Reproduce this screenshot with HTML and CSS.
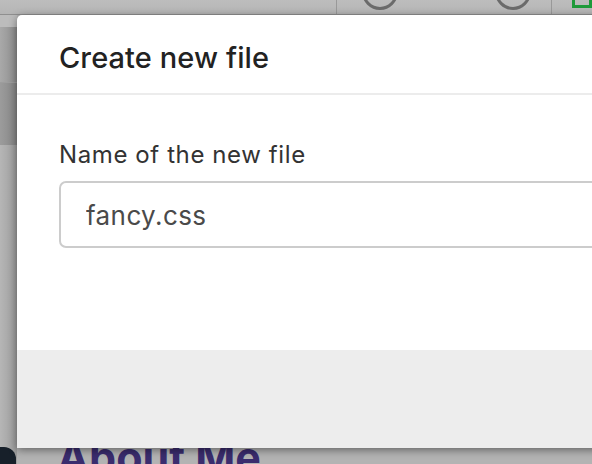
FILE: index.html
```html
<!DOCTYPE html>
<html lang="en">
<head>
    <meta charset="UTF-8">
    <meta name="viewport" content="width=device-width, initial-scale=1.0">
    <title>Create new file</title>
    <link rel="stylesheet" href="styles.css">
</head>
<body>
    <div class="page">
        <div class="topbar">
            <div class="tb-left"></div>
            <div class="tb-mid">
                <span class="circle"></span>
                <span class="circle"></span>
            </div>
            <div class="tb-right"><span class="green"></span></div>
        </div>
        <div class="side">
            <div class="row r1"></div>
            <div class="row r2"><span class="mark"></span></div>
            <div class="row r3"></div>
            <div class="avatar"></div>
        </div>
        <h2 class="about">About Me</h2>
    </div>

    <section class="modal">
        <header class="modal-header">
            <h1>Create new file</h1>
        </header>
        <div class="modal-body">
            <label for="filename">Name of the new file</label>
            <input type="text" id="filename" value="fancy.css">
        </div>
        <footer class="modal-footer"></footer>
    </section>
</body>
</html>
```

FILE: styles.css
```css
* {
    padding: 0px;
    margin: 0px;
    box-sizing: border-box;
    font-family: Inter, "Open Sans", Arial, sans-serif;
}
body {
    width: 592px;
    height: 464px;
    overflow: hidden;
    position: relative;
    background: #b3b3b3;
}
.page {
    height: 100%;
    position: relative;
}
.topbar {
    height: 15px;
    display: flex;
    background: linear-gradient(#bdbdbd, #b5b5b5);
    border-bottom: 1px solid #8f8f8f;
}
.tb-left {
    width: 339px;
}
.tb-mid {
    width: 218px;
    border-left: 1px solid #999;
    border-right: 1px solid #999;
    display: flex;
    gap: 97px;
    padding-left: 25px;
    overflow: hidden;
}
.circle {
    width: 36px;
    height: 36px;
    border: 3px solid #6b6b6b;
    border-radius: 50%;
    margin-top: -26px;
    flex-shrink: 0;
}
.tb-right {
    flex: 1;
    padding-left: 20px;
}
.green {
    display: block;
    width: 20px;
    height: 8px;
    border: 3px solid #1f9a3a;
    border-top: none;
}
.side {
    width: 17px;
    height: 449px;
    display: flex;
    flex-direction: column;
    position: relative;
}
.row.r1 {
    height: 12px;
    background: #bcbcbc;
}
.row.r2 {
    height: 55px;
    background: linear-gradient(90deg, #a9a9a9, #8d8d8d);
}
.row.r3 {
    height: 63px;
    background: linear-gradient(90deg, #9c9c9c, #858585);
    border-top: 1px solid #9d9d9d;
}
.mark {
    display: block;
    width: 6px;
    height: 16px;
    border-radius: 3px;
    background: #222;
    margin: 62px 0 0 14px;
}
.side::after {
    content: "";
    flex: 1;
    background: linear-gradient(90deg, #b6b6b6, #9c9c9c);
}
.avatar {
    position: absolute;
    left: -20px;
    top: 432px;
    width: 36px;
    height: 40px;
    border-radius: 12px;
    background: #17202a;
}
.about {
    position: absolute;
    left: 57px;
    top: 431px;
    font-size: 43px;
    font-weight: 700;
    color: #3a2c6e;
}
.modal {
    position: absolute;
    left: 17px;
    top: 15px;
    width: 620px;
    height: 433px;
    background: #fff;
    border-radius: 5px 0 0 0;
    box-shadow: 0 2px 8px rgba(0, 0, 0, 0.45);
    display: flex;
    flex-direction: column;
}
.modal-header {
    height: 80px;
    padding: 25px 0 0 42px;
    border-bottom: 2px solid #ececec;
}
.modal-header h1 {
    font-size: 29px;
    font-weight: 500;
    color: #222;
    letter-spacing: 0.1px;
}
.modal-body {
    height: 255px;
    padding: 45px 0 0 42px;
    display: flex;
    flex-direction: column;
}
.modal-body label {
    font-size: 24px;
    color: #333;
    letter-spacing: 0.6px;
    margin-bottom: 12px;
}
.modal-body input {
    height: 67px;
    flex-shrink: 0;
    width: 600px;
    border: 2px solid #cccccc;
    border-radius: 7px;
    padding: 2px 0 0 25px;
    font-size: 26px;
    letter-spacing: 0.4px;
    color: #4a4a4a;
    outline: none;
}
.modal-footer {
    flex: 1;
    background: #ededed;
}
```
